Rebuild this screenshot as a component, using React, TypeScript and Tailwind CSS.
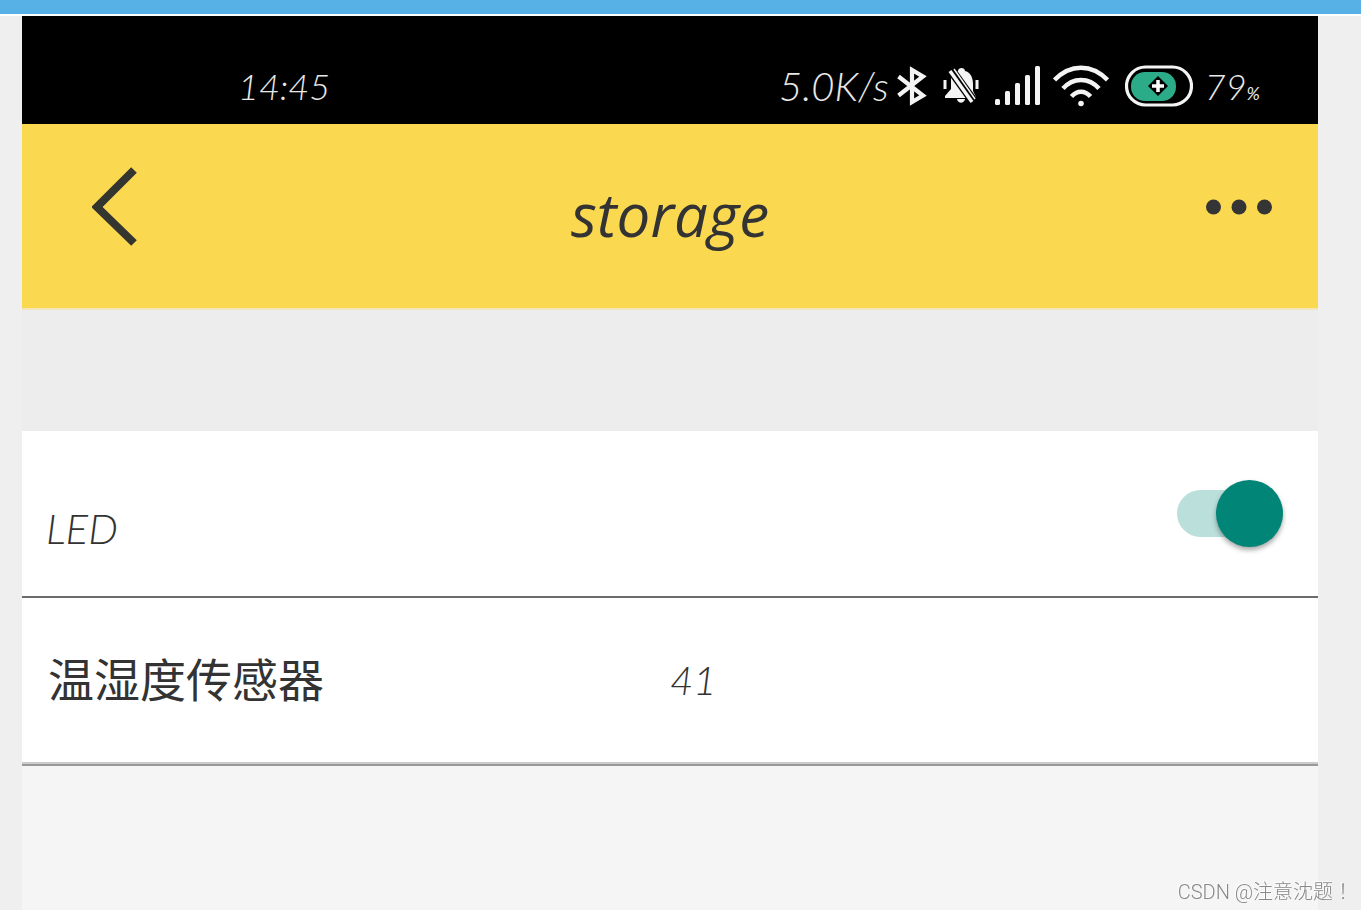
import { useState } from "react";

function BluetoothIcon() {
  return (
    <svg className="h-10 w-[30px] shrink-0" viewBox="0 0 30 40" fill="none" stroke="#f4f4f4" strokeWidth="4.200">
      <path strokeLinejoin="miter" d="M1.500 10.500L26 29.500L15 36V4L26 10.500L1.500 29.500" />
    </svg>
  );
}

function MutedBellIcon() {
  return (
    <svg className="h-10 w-9 shrink-0" viewBox="0 0 36 40" fill="#f4f4f4">
      <path d="M15 5C15 1 22 1 22 5C27 6 30 11 30 18V25L33 31V32H2V30L8 23V14C8 9 10 6 15 5Z" />
      <path d="M14 33H22C21 38 15 38 14 33Z" />
      <path d="M8 4L31 36" stroke="#000" strokeWidth="9" fill="none" />
      <path d="M7 5L29 36" stroke="#f4f4f4" strokeWidth="3.500" fill="none" />
      <path d="M11 3L32 33" stroke="#f4f4f4" strokeWidth="1.500" fill="none" />
      <path d="M2 14V23M34 14V23" stroke="#f4f4f4" strokeWidth="3" fill="none" />
    </svg>
  );
}

function SignalIcon() {
  return (
    <svg className="h-10 w-[46px] shrink-0" viewBox="0 0 46 40" fill="#f4f4f4">
      <rect x="0" y="33" width="5" height="6" rx="1.500" />
      <rect x="10" y="25" width="5" height="14" rx="1.500" />
      <rect x="20" y="17" width="5" height="22" rx="1.500" />
      <rect x="30" y="9" width="5" height="30" rx="1.500" />
      <rect x="40" y="0" width="5" height="39" rx="1.500" />
    </svg>
  );
}

function WifiIcon() {
  return (
    <svg className="h-[42px] w-14 shrink-0" viewBox="0 0 56 42" fill="none" stroke="#f4f4f4" strokeWidth="4.500">
      <path d="M1.500 15C17 -1.500 39 -1.500 54.500 15" />
      <path d="M10 23.500C20 12 36 12 46 23.500" />
      <path d="M18.500 31.500C24 25 32 25 37.500 31.500" />
      <circle cx="28" cy="38.500" r="2.800" fill="#f4f4f4" stroke="none" />
    </svg>
  );
}

function BatteryIcon() {
  return (
    <svg className="h-[42px] w-[68px] shrink-0" viewBox="0 0 68 42">
      <rect x="1.500" y="2" width="65" height="38" rx="19" fill="none" stroke="#f4f4f4" strokeWidth="3.200" />
      <rect x="6" y="7" width="45" height="29" rx="14" fill="#2bab87" />
      <path d="M33 11L43 21L33 31L23 21Z" fill="#000" />
      <path d="M33 15V27M27 21H39" stroke="#fff" strokeWidth="3.500" />
    </svg>
  );
}

function StatusBar() {
  return (
    <div className="flex h-[108px] items-center justify-between bg-black pt-8 pr-[58px] pl-[216px] text-[36px] leading-[42px] font-light text-[#e8e8e8] italic">
      <span>14:45</span>
      <div className="flex items-center">
        <span className="mr-2 text-[40px]">5.0K/s</span>
        <BluetoothIcon />
        <span className="ml-4 flex items-center gap-4">
          <MutedBellIcon />
          <SignalIcon />
        </span>
        <span className="ml-3 flex items-center gap-4">
          <WifiIcon />
          <BatteryIcon />
        </span>
        <span className="ml-3">
          79<span className="text-[18px] leading-none font-normal">%</span>
        </span>
      </div>
    </div>
  );
}

function TitleBar() {
  return (
    <header className="flex h-[186px] items-start justify-between border-b-2 border-[#f3e6bb] bg-[#fad850] px-[46px] pt-[42px] text-[#333]">
      <button type="button" aria-label="Back" className="w-[93px] pl-6">
        <svg className="h-20 w-[46px]" viewBox="0 0 46 80" fill="none" stroke="#353530" strokeWidth="8">
          <path d="M42 4L5 41L42 77" />
        </svg>
      </button>
      <h1 className="pt-4 font-['Open_Sans',sans-serif] text-[60px] leading-[64px] italic">storage</h1>
      <button type="button" aria-label="More" className="flex h-[82px] w-[93px] items-center justify-end">
        <svg className="h-4 w-[66px]" viewBox="0 0 66 16" fill="#353535">
          <circle cx="7.500" cy="8" r="7.500" />
          <circle cx="33" cy="8" r="7.500" />
          <circle cx="58.500" cy="8" r="7.500" />
        </svg>
      </button>
    </header>
  );
}

function LedSwitch() {
  const [on, setOn] = useState(true);
  return (
    <span className="relative flex h-[67px] w-[106px] items-center">
      <input
        id="led"
        type="checkbox"
        role="switch"
        checked={on}
        onChange={(e) => setOn(e.target.checked)}
        className="peer absolute inset-0 z-10 m-0 h-full w-full cursor-pointer opacity-0"
      />
      <span className="h-[47px] w-full rounded-full bg-gray-300 peer-checked:bg-[#bbdfdb]" />
      <span className="absolute left-0 size-[67px] rounded-full bg-gray-100 shadow-[0_3px_5px_rgba(0,0,0,0.35)] peer-checked:right-0 peer-checked:left-auto peer-checked:bg-[#008577]" />
    </span>
  );
}

export default function App() {
  return (
    <div className="min-h-screen bg-[#efefef] font-[Lato,'Noto_Sans_CJK_SC',sans-serif]">
      <div className="h-4 border-b-2 border-white bg-[#58b1e6]" />
      <main className="mr-[43px] ml-[22px] flex min-h-[calc(100vh-16px)] flex-col bg-[#f5f5f5]">
        <StatusBar />
        <TitleBar />
        <div className="h-[121px] bg-[#ededed]" />
        <section className="border-b-2 border-[#999] bg-white text-[#333]">
          <div className="flex h-[167px] items-center justify-between border-b-2 border-[#6b6b6b] pr-[35px] pl-6">
            <label htmlFor="led" className="pt-7 text-[42px] leading-[48px] font-light italic">
              LED
            </label>
            <LedSwitch />
          </div>
          <div className="grid h-[166px] grid-cols-2 items-center border-b-2 border-[#ccc]">
            <span className="pl-[26px] text-[46px] leading-[56px]">温湿度传感器</span>
            <span className="text-[40px] leading-[48px] font-light italic">41</span>
          </div>
        </section>
      </main>
      <div className="fixed right-2 bottom-1 font-[Roboto,'Noto_Sans_CJK_SC',sans-serif] text-[20px] leading-[28px] font-light text-[#888] [text-shadow:-1px_-1px_0_#fff]">
        CSDN @注意沈题<span className="font-['Noto_Sans_CJK_TC',sans-serif]">！</span>
      </div>
    </div>
  );
}
